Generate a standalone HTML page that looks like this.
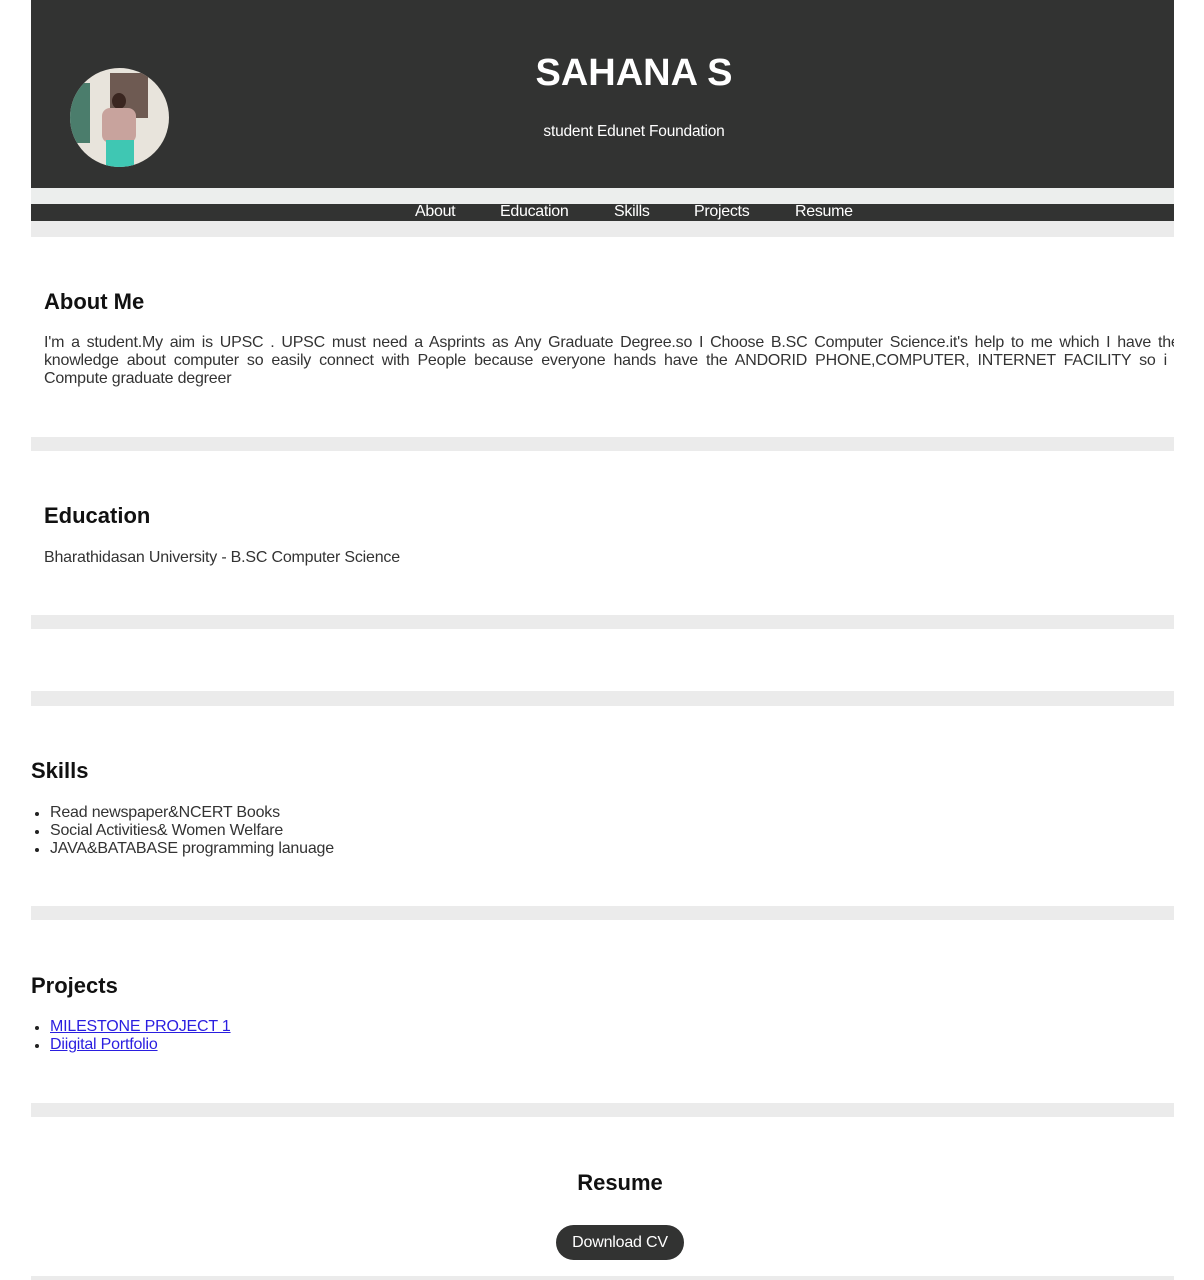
<!DOCTYPE html>
<html><head><meta charset="utf-8"><style>
*{margin:0;padding:0;box-sizing:border-box}
body{width:1204px;height:1280px;background:#fff;position:relative;overflow:hidden;font-family:"Liberation Sans",Arial,sans-serif;color:#222}
.a{position:absolute}
.band{position:absolute;left:31px;width:1143px;background:#ebebeb}
h2{position:absolute;font-size:22px;font-weight:bold;color:#111}
.t{position:absolute;font-size:16px;color:#333;letter-spacing:-0.2px}
ul{list-style:none}
li{position:relative;padding-left:19px;height:18px;line-height:18px}
li:before{content:"";position:absolute;left:4px;top:8px;width:4px;height:4px;border-radius:50%;background:#222}
a{color:#2a1ee0;text-decoration:underline}
</style></head><body>
<div class="a" style="left:31px;top:0;width:1143px;height:188px;background:#323332"></div>
<div class="a" style="left:70px;top:68px;width:99px;height:99px;border-radius:50%;overflow:hidden;background:#e8e4dc">
 <div class="a" style="left:40px;top:5px;width:38px;height:45px;background:#6e5a52"></div>
 <div class="a" style="left:0;top:15px;width:20px;height:60px;background:#4b7d6c"></div>
 <div class="a" style="left:42px;top:25px;width:14px;height:16px;border-radius:50%;background:#3a2620"></div>
 <div class="a" style="left:32px;top:40px;width:34px;height:35px;border-radius:8px;background:#c8a39d"></div>
 <div class="a" style="left:36px;top:72px;width:28px;height:30px;background:#3fc7b3"></div>
</div>
<div class="a" style="left:31px;top:52px;width:1206px;text-align:center;color:#fff;font-size:38px;font-weight:bold">SAHANA S</div>
<div class="a" style="left:31px;top:123px;width:1206px;text-align:center;color:#fff;font-size:15.5px;letter-spacing:-0.2px">student Edunet Foundation</div>
<div class="band" style="top:188px;height:16px;background:#eceeed"></div>
<div class="a" style="left:31px;top:204px;width:1143px;height:17px;background:#323332"></div>
<div class="a" style="top:203px;left:415px;color:#fff;font-size:16px;letter-spacing:-0.3px;white-space:nowrap">
<span style="position:absolute;left:0">About</span><span style="position:absolute;left:85px">Education</span><span style="position:absolute;left:199px">Skills</span><span style="position:absolute;left:279px">Projects</span><span style="position:absolute;left:380px">Resume</span></div>
<div class="band" style="top:221px;height:16px"></div>

<h2 style="left:44px;top:289px">About Me</h2>
<div class="a" style="left:0;top:334px;width:1174px;height:60px;overflow:hidden">
<div class="t" style="left:44px;top:0;white-space:nowrap;word-spacing:2.6px">I'm a student.My aim is UPSC . UPSC must need a Asprints as Any Graduate Degree.so I Choose B.SC Computer Science.it's help to me which I have the basic</div>
<div class="t" style="left:44px;top:18px;width:1123px;text-align:justify;text-align-last:justify">knowledge about computer so easily connect with People because everyone hands have the ANDORID PHONE,COMPUTER, INTERNET FACILITY so i</div>
<div class="t" style="left:44px;top:36px">Compute graduate degreer</div>
</div>
<div class="band" style="top:437px;height:14px"></div>

<h2 style="left:44px;top:503px">Education</h2>
<div class="t" style="left:44px;top:549px">Bharathidasan University - B.SC Computer Science</div>
<div class="band" style="top:615px;height:14px"></div>
<div class="band" style="top:691px;height:15px"></div>

<h2 style="left:31px;top:758px">Skills</h2>
<ul class="t" style="left:31px;top:804px"><li>Read newspaper&amp;NCERT Books</li><li>Social Activities&amp; Women Welfare</li><li>JAVA&amp;BATABASE programming lanuage</li></ul>
<div class="band" style="top:906px;height:14px"></div>

<h2 style="left:31px;top:973px">Projects</h2>
<ul class="t" style="left:31px;top:1018px"><li><a>MILESTONE PROJECT 1</a></li><li><a>Diigital Portfolio</a></li></ul>
<div class="band" style="top:1103px;height:14px"></div>

<h2 style="left:0;width:1240px;text-align:center;top:1170px">Resume</h2>
<div class="a" style="left:556px;top:1225px;width:128px;height:35px;border-radius:18px;background:#323332;color:#fff;font-size:16px;letter-spacing:-0.2px;text-align:center;line-height:35px">Download CV</div>
<div class="band" style="top:1276px;height:4px"></div>
</body></html>
